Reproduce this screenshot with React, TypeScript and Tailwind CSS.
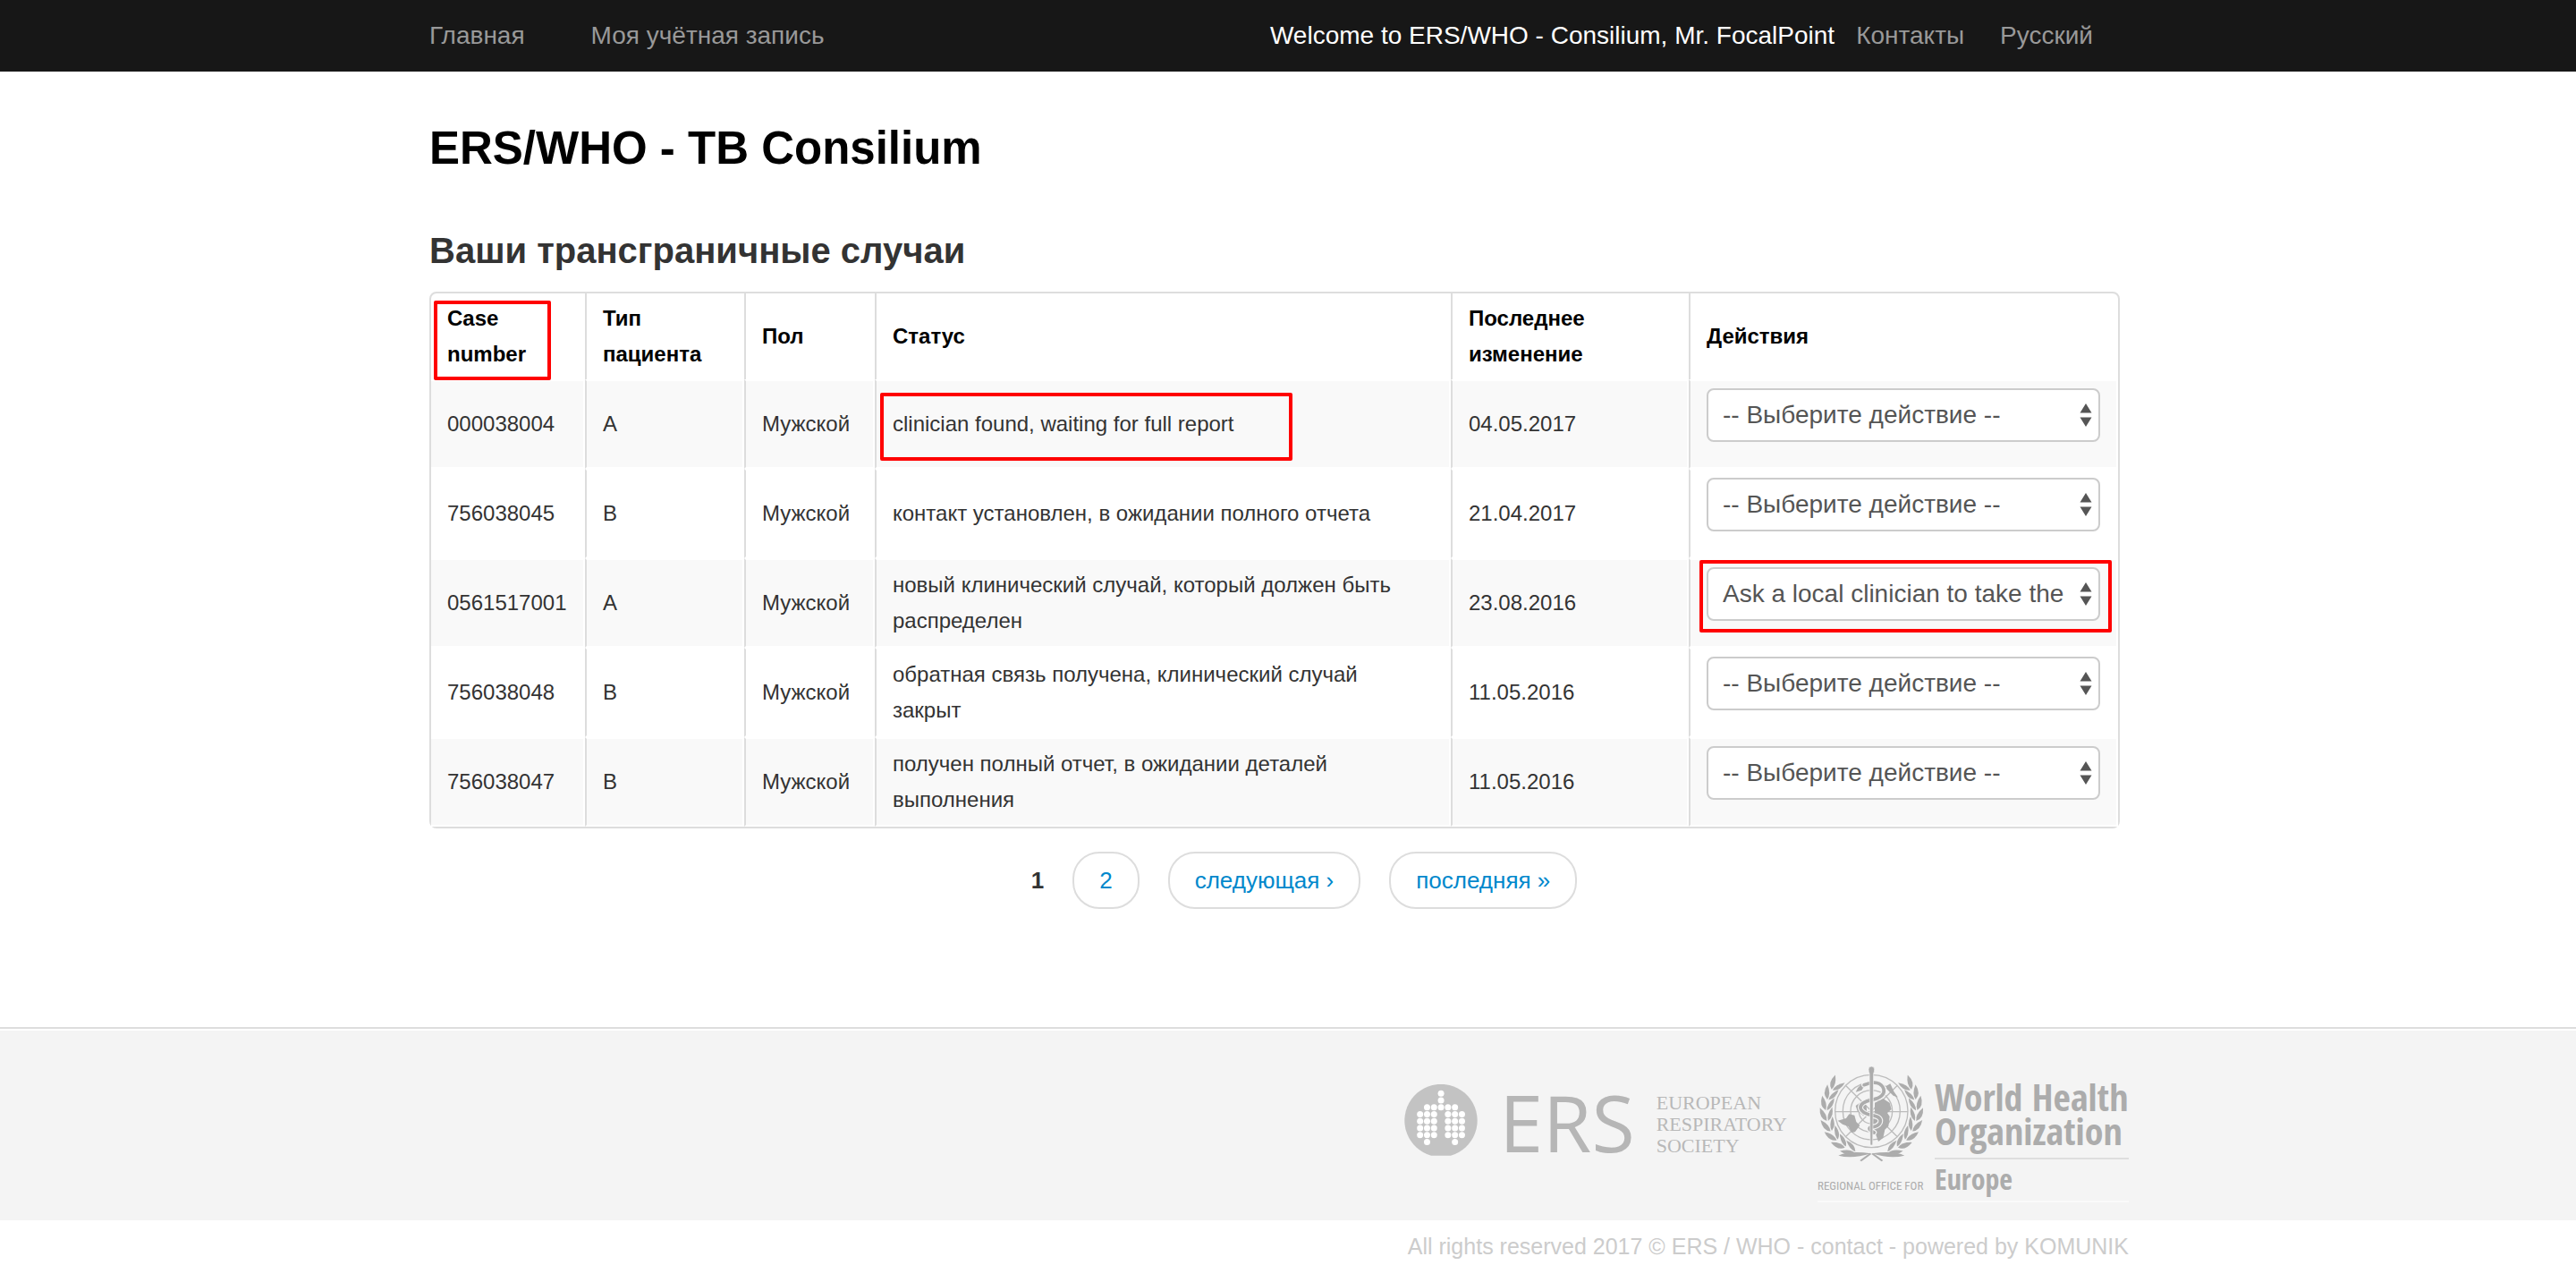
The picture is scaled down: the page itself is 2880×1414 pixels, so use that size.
type CaseRow = {
  id: string;
  type: string;
  sex: string;
  status: string;
  changed: string;
  action: string;
  markStatus?: boolean;
  markAction?: boolean;
};

const CHOOSE = "-- Выберите действие --";
const ASK = "Ask a local clinician to take the";

const rows: CaseRow[] = [
  { id: "000038004", type: "A", sex: "Мужской", status: "clinician found, waiting for full report", changed: "04.05.2017", action: CHOOSE, markStatus: true },
  { id: "756038045", type: "B", sex: "Мужской", status: "контакт установлен, в ожидании полного отчета", changed: "21.04.2017", action: CHOOSE },
  { id: "0561517001", type: "A", sex: "Мужской", status: "новый клинический случай, который должен быть распределен", changed: "23.08.2016", action: ASK, markAction: true },
  { id: "756038048", type: "B", sex: "Мужской", status: "обратная связь получена, клинический случай закрыт", changed: "11.05.2016", action: CHOOSE },
  { id: "756038047", type: "B", sex: "Мужской", status: "получен полный отчет, в ожидании деталей выполнения", changed: "11.05.2016", action: CHOOSE },
];

function TopBar() {
  return (
    <header className="bg-[#171717] text-[28px] leading-[80px] text-[#999]">
      <nav className="mx-auto flex w-full max-w-[1920px] justify-between whitespace-nowrap pr-[60px]">
        <div className="flex gap-[74px]">
          <a href="#home">Главная</a>
          <a href="#account">Моя учётная запись</a>
        </div>
        <div className="flex">
          <span className="mr-6 text-white">Welcome to ERS/WHO - Consilium, Mr. FocalPoint</span>
          <a href="#contacts" className="mr-10">Контакты</a>
          <a href="#language">Русский</a>
        </div>
      </nav>
    </header>
  );
}

function ActionSelect({ id, value }: { id: string; value: string }) {
  return (
    <div className="relative mb-5">
      <select
        aria-label={`Действие для случая ${id}`}
        defaultValue={value}
        className="block h-[60px] w-full appearance-none rounded-lg border-2 border-[#ccc] bg-white pl-4 pr-8 text-[28px] text-[#555]"
      >
        <option value={CHOOSE}>{CHOOSE}</option>
        <option value={ASK}>{ASK}</option>
      </select>
      <svg aria-hidden="true" viewBox="0 0 14 26" className="pointer-events-none absolute right-[9px] top-[17px] h-[26px] w-[14px] fill-[#555]">
        <path d="M7 0l6.500 10.500h-13zM7 26l6.500-10.500h-13z" />
      </svg>
    </div>
  );
}

function CasesTable() {
  const th = "border-l-2 border-[#ddd] px-[18px] py-2 font-bold first:border-l-0";
  const td = "border-2 border-white border-l-[#ddd] pl-[18px] py-2 first:border-l-0";
  return (
    <table className="mt-4 w-full table-fixed border-separate border-spacing-0 rounded-lg border-2 border-[#ddd] text-left text-[24px] leading-10 text-[#333]">
      <colgroup>
        <col className="w-[172px]" />
        <col className="w-[178px]" />
        <col className="w-[146px]" />
        <col />
        <col className="w-[266px]" />
        <col className="w-[480px]" />
      </colgroup>
      <thead className="text-black">
        <tr>
          <th className={`relative ${th}`}>
            Case number
            <span className="pointer-events-none absolute left-[3px] top-2 h-[89px] w-[131px] rounded-xs border-4 border-[#f00]" />
          </th>
          <th className={th}>Тип пациента</th>
          <th className={th}>Пол</th>
          <th className={th}>Статус</th>
          <th className={th}>Последнее изменение</th>
          <th className={th}>Действия</th>
        </tr>
      </thead>
      <tbody>
        {rows.map((r) => (
          <tr key={r.id} className="odd:bg-[#f9f9f9]">
            <td className={td}>{r.id}</td>
            <td className={td}>{r.type}</td>
            <td className={td}>{r.sex}</td>
            <td className={`relative pr-10 ${td}`}>
              {r.status}
              {r.markStatus && <span className="pointer-events-none absolute left-1 top-[13px] h-[76px] w-[461px] rounded-xs border-4 border-[#f00]" />}
            </td>
            <td className={td}>{r.changed}</td>
            <td className={`relative pr-[18px] ${td}`}>
              <ActionSelect id={r.id} value={r.action} />
              {r.markAction && <span className="pointer-events-none absolute left-[10px] right-[5px] top-0 h-[81px] rounded-xs border-4 border-[#f00]" />}
            </td>
          </tr>
        ))}
      </tbody>
    </table>
  );
}

function Pagination() {
  const pill = "rounded-[30px] border-2 border-[#ddd] px-7 leading-[60px] text-[#08c]";
  return (
    <nav aria-label="Страницы" className="mt-[26px] flex justify-center gap-8 pl-[66px] text-[26px]">
      <span aria-current="page" className="font-bold leading-[64px] text-[#333]">1</span>
      <a href="#page-2" className={pill}>2</a>
      <a href="#next" className={pill}>следующая ›</a>
      <a href="#last" className={pill}>последняя »</a>
    </nav>
  );
}

/* Lungs drawn as a dot grid: [x, y] in steps of the dot pitch. */
const half = [
  [1, 2], [2, 2],
  [0, 3], [1, 3], [2, 3],
  [0, 4], [1, 4], [2, 4],
  [0, 5], [1, 5], [2, 5],
  [0, 6], [1, 6], [2, 6],
  [1, 7],
];
const lungDots = [[3, 0], [3, 1], [3, 2], ...half, ...half.map(([x, y]) => [6 - x, y])];

function ErsLogo() {
  return (
    <div className="mt-[21px] flex whitespace-nowrap">
      <svg aria-hidden="true" viewBox="0 0 246 240" className="mr-6 h-[80px] w-[82px]">
        <path d="M90 239a122 122 0 1 1 66 0z" fill="#c3c3c3" />
        <g fill="#fff">
          {lungDots.map(([x, y], i) => (
            <circle key={i} cx={53 + x * 23.400} cy={31 + y * 23.200} r="10.500" />
          ))}
        </g>
      </svg>
      <span className="mr-6 font-['Open_Sans',sans-serif] text-[88px] leading-[84px] text-[#b6b6b6]">ERS</span>
      <span className="mt-[9px] font-['Liberation_Serif',serif] text-[22px] leading-6 text-[#b8b8b8]">
        EUROPEAN<br />RESPIRATORY<br />SOCIETY
      </span>
    </div>
  );
}

function Branch() {
  const leaves = Array.from({ length: 8 }, (_, i) => {
    const deg = 118 + i * 14;
    const a = (deg * Math.PI) / 180;
    return { x: 205 + 150 * Math.cos(a), y: 168 + 146 * Math.sin(a), dir: deg + 96 };
  });
  return (
    <g>
      {leaves.map((l, i) => (
        <g key={i} transform={`translate(${l.x} ${l.y})`}>
          <path d="M-4 0Q14-20 46-3Q16 12-4 0z" transform={`rotate(${l.dir - 24}) translate(-12 -8)`} />
          <path d="M-4 0Q14-11 44 2Q16 16-4 0z" transform={`rotate(${l.dir + 14}) translate(-12 8)`} />
        </g>
      ))}
      <path d="M94 317Q130 300 203 310Q140 330 94 317z" />
      <path d="M166 333l34-25 5 4-34 25z" />
    </g>
  );
}

function WhoEmblem() {
  return (
    <svg aria-hidden="true" viewBox="24 15 360 324" className="h-[108px] w-[120px]" fill="#acacac">
      <g fill="none" stroke="#bcbcbc" strokeWidth="4">
        <circle cx="205" cy="168" r="122" />
        <circle cx="205" cy="168" r="96" />
        <circle cx="205" cy="168" r="70" />
        <circle cx="205" cy="168" r="42" />
        <path d="M83 170h244M118 82l174 172M292 82L118 254" />
      </g>
      <path d="M92 200l28-8 10-14 18 4 6 22 12 12-16 22-12 2-10-20-20-8z" />
      <path d="M152 150l20-14 16 14 2 26-12 8-20-16z" />
      <path d="M216 140l28-14 22 14 6 22-14 12 8 12-4 32-12 12-6 28-16 12-10-28-20-14 4-34 14-22z" />
      <path d="M254 84l14-8 12 26 14 20-16-6-22-22z" />
      <path d="M152 104q12-32 44-36l4 10q-20 4-28 20z" />
      <g fill="none" strokeLinecap="round">
        <path d="M180 80q54-20 66 14 6 26-38 36-42 8-40 28 4 18 40 24 32 6 26 24-6 14-32 16-12 6 12 18" stroke="#f4f4f4" strokeWidth="18" />
        <path d="M180 80q54-20 66 14 6 26-38 36-42 8-40 28 4 18 40 24 32 6 26 24-6 14-32 16-12 6 12 18" stroke="#acacac" strokeWidth="11" />
      </g>
      <path d="M195 28a10 10 0 0 1 20 0q0 8-3 14l-3 240h-8l-3-240q-3-6-3-14z" stroke="#f4f4f4" strokeWidth="2" />
      <Branch />
      <g transform="matrix(-1 0 0 1 410 0)">
        <Branch />
      </g>
    </svg>
  );
}

function WhoLogo() {
  return (
    <div className="grid grid-cols-[120px_217px] items-baseline gap-x-[11px] whitespace-nowrap border-b-2 border-[#fafafa] pb-[5px] font-['Open_Sans_Condensed',sans-serif] font-bold text-[#acacac]">
      <div className="self-start">
        <WhoEmblem />
      </div>
      <div className="mt-4 self-start border-b-2 border-[#dedede] pb-[11px] text-[42px] leading-[38px]">
        World Health<br />Organization
      </div>
      <span className="font-['Roboto_Condensed',sans-serif] text-[13px] font-normal">REGIONAL OFFICE FOR</span>
      <span className="text-[32px] leading-[38px]">Europe</span>
    </div>
  );
}

export default function App() {
  return (
    <div className="bg-white font-['Liberation_Sans',Arial,sans-serif]">
      <TopBar />
      <main className="mx-auto w-full max-w-[1920px] pb-[132px] pr-[30px] pt-14">
        <h1 className="text-[51px] font-bold leading-[60px] text-black">ERS/WHO - TB Consilium</h1>
        <h2 className="mt-[54px] text-[40px] font-bold leading-[60px] text-[#333]">Ваши трансграничные случаи</h2>
        <CasesTable />
        <Pagination />
      </main>
      <footer className="border-t-2 border-[#ddd]">
        <div className="border-t-2 border-white bg-[#f4f4f4] pb-5 pt-[39px]">
          <div className="mx-auto flex w-full max-w-[1920px] items-start justify-end gap-[34px] pr-5">
            <ErsLogo />
            <WhoLogo />
          </div>
        </div>
        <p className="mx-auto w-full max-w-[1920px] pr-5 pt-2 text-right text-[25px] leading-[42px] text-[#ccc]">
          All rights reserved 2017 © ERS / WHO - <a href="#contact">contact</a> - powered by <a href="#komunik">KOMUNIK</a>
        </p>
      </footer>
    </div>
  );
}
